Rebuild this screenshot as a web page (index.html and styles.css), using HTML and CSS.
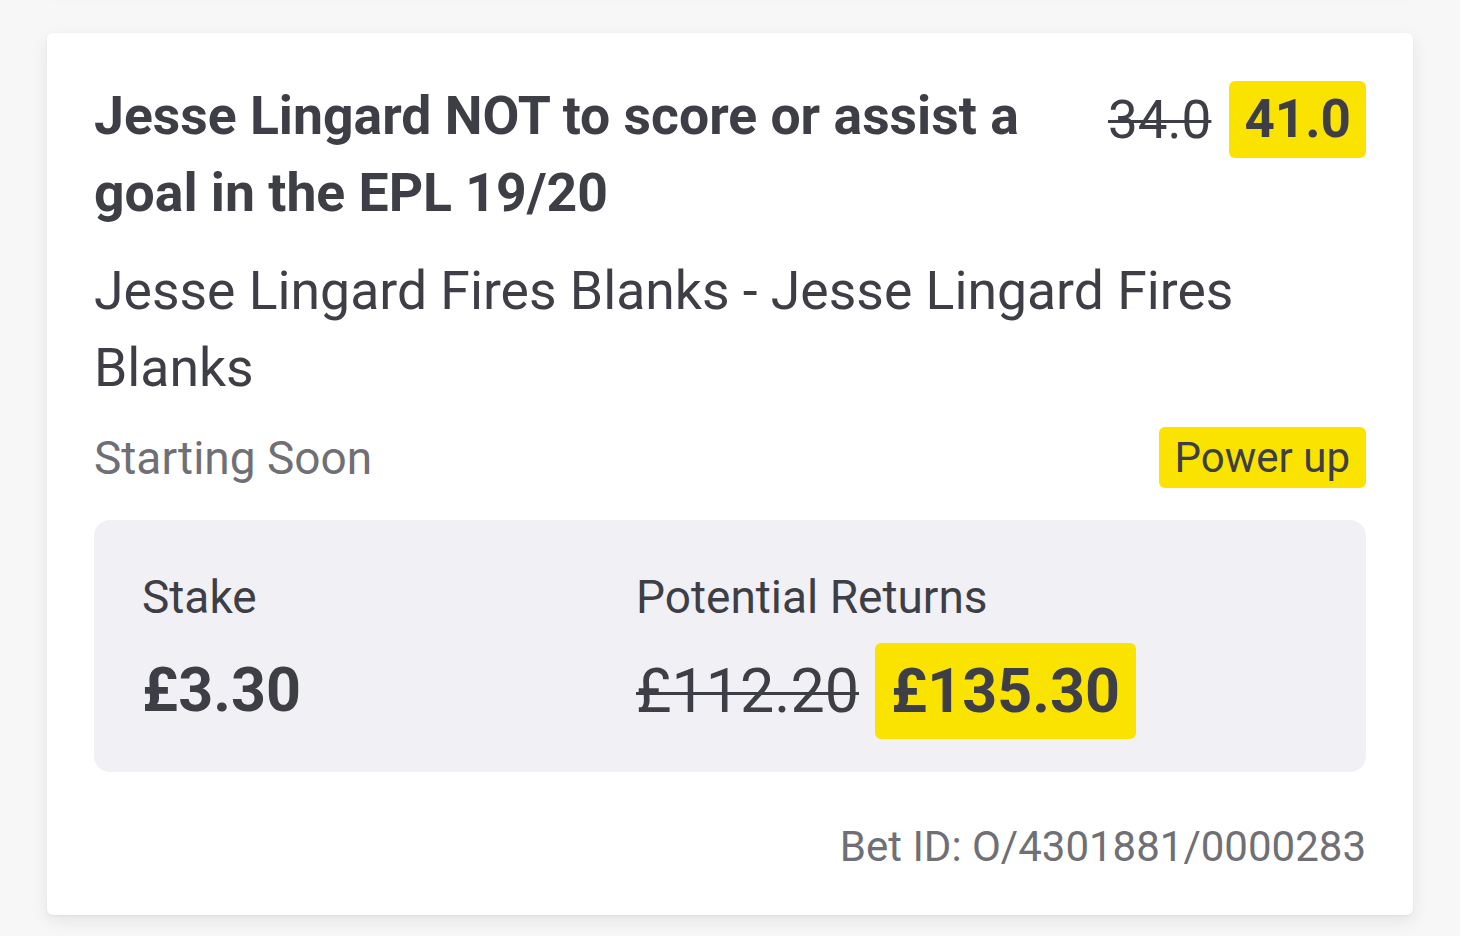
FILE: index.html
```html
<!DOCTYPE html>
<html>
<head>
<meta charset="utf-8">
<link rel="stylesheet" href="styles.css">
</head>
<body>
<div class="page">
  <div class="prev-card"></div>
  <div class="card">
    <div class="head">
      <h1 class="title">Jesse Lingard NOT to score or assist a goal in the EPL 19/20</h1>
      <div class="odds">
        <span class="old">34.0</span>
        <span class="new">41.0</span>
      </div>
    </div>
    <p class="desc">Jesse Lingard Fires Blanks - Jesse Lingard Fires Blanks</p>
    <div class="status-row">
      <span class="status">Starting Soon</span>
      <span class="power">Power up</span>
    </div>
    <div class="summary">
      <div class="col stake-col">
        <div class="label">Stake</div>
        <div class="amount">£3.30</div>
      </div>
      <div class="col returns-col">
        <div class="label">Potential Returns</div>
        <div class="amount-row">
          <span class="amount old-amount">£112.20</span>
          <span class="amount new-amount">£135.30</span>
        </div>
      </div>
    </div>
    <div class="bet-id">Bet ID: O/4301881/0000283</div>
  </div>
</div>
</body>
</html>
```
FILE: styles.css
```css
* { box-sizing: border-box; }
html, body {
  margin: 0;
  padding: 0;
  background: #f7f7f7;
  font-family: Roboto, "Liberation Sans", sans-serif;
  color: #3e3e46;
}
.page {
  width: 1460px;
  height: 936px;
  overflow: hidden;
  padding: 0 47px;
}
.prev-card {
  height: 2px;
  margin: -10px 0 41px;
  background: #fff;
  box-shadow: 0 4px 14px rgba(0,0,0,0.08);
}
.card {
  background: #fff;
  border-radius: 6px;
  box-shadow: 0 6px 18px rgba(0,0,0,0.08), 0 1px 3px rgba(0,0,0,0.05);
  padding: 48px 47px 40px 47px;
  height: 882px;
}
.head {
  display: flex;
  justify-content: space-between;
  align-items: flex-start;
}
.title {
  margin: 0;
  font-size: 53.5px;
  line-height: 77px;
  font-weight: 700;
  width: 990px;
  margin-top: -4px;
}
.odds {
  display: flex;
  align-items: center;
  gap: 18px;
  margin-top: 0;
}
.odds .old {
  font-size: 53px;
  text-decoration: line-through;
  text-decoration-thickness: 3px;
  color: #3e3e46;
}
.odds .new {
  background: #fbe300;
  border-radius: 6px;
  font-size: 53px;
  font-weight: 700;
  line-height: 77px;
  padding: 0 15px;
}
.desc {
  margin: 21px 0 0;
  font-size: 53.5px;
  line-height: 77px;
  width: 1200px;
}
.status-row {
  display: flex;
  justify-content: space-between;
  align-items: center;
  margin-top: 21px;
}
.status {
  font-size: 46px;
  color: #6f6f75;
}
.power {
  background: #fbe300;
  border-radius: 6px;
  font-size: 42px;
  line-height: 61px;
  padding: 0 16px;
  color: #3e3e46;
}
.summary {
  margin-top: 32px;
  background: #f1f1f5;
  border-radius: 16px;
  height: 252px;
  display: flex;
  padding: 48px 48px 0;
}
.col { display: flex; flex-direction: column; }
.stake-col { width: 494px; }
.label {
  font-size: 46px;
  line-height: 58px;
}
.amount {
  font-size: 61px;
  font-weight: 700;
  line-height: 96px;
}
.stake-col .amount { margin-top: 16px; }
.amount-row {
  display: flex;
  align-items: center;
  gap: 16px;
  margin-top: 17px;
}
.old-amount {
  font-weight: 400;
  text-decoration: line-through;
  text-decoration-thickness: 3px;
}
.new-amount {
  background: #fbe300;
  border-radius: 6px;
  padding: 0 16px;
}
.bet-id {
  margin-top: 50px;
  text-align: right;
  font-size: 42px;
  color: #6f6f75;
}
```
